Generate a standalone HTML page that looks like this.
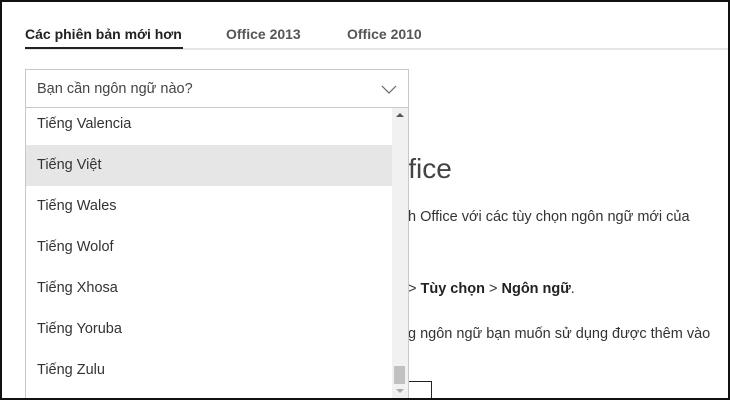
<!DOCTYPE html>
<html><head><meta charset="utf-8"><style>
*{margin:0;padding:0;box-sizing:border-box}
html,body{width:730px;height:400px;overflow:hidden}
body{background:#fff;font-family:"Liberation Sans","DejaVu Sans",sans-serif;color:#222;position:relative}
.frame{position:absolute;left:0;top:0;width:730px;height:400px;border:2px solid #111;z-index:10;pointer-events:none}
.a{position:absolute;white-space:nowrap}
.tab{font-weight:bold;font-size:14px;top:26px;color:#555}
.item{position:absolute;left:26px;width:366px;height:41px;line-height:41px;padding-left:11px;font-size:14.5px;color:#333}
.rt{font-size:14.5px;color:#333}
</style></head><body>
<div class="frame"></div>
<div class="a tab" style="left:25px;color:#222">Các phiên bản mới hơn</div>
<div class="a tab" style="left:226px">Office 2013</div>
<div class="a tab" style="left:347px">Office 2010</div>
<div class="a" style="left:25px;top:48px;width:704px;height:2px;background:#e6e6e6"></div>
<div class="a" style="left:25px;top:47px;width:158px;height:2px;background:#222"></div>

<div class="a" style="left:401px;top:153px;font-size:28px;color:#444;font-weight:300">ffice</div>
<div class="a rt" style="left:408px;top:209px">h Office với các tùy chọn ngôn ngữ mới của</div>
<div class="a rt" style="left:408px;top:281px">&gt; <b style="color:#222">Tùy chọn</b> &gt; <b style="color:#222">Ngôn ngữ</b>.</div>
<div class="a rt" style="left:408px;top:326px">g ngôn ngữ bạn muốn sử dụng được thêm vào</div>
<div class="a" style="left:400px;top:381px;width:32px;height:30px;border:1.5px solid #222"></div>

<div class="a" style="left:25px;top:69px;width:384px;height:39px;border:1px solid #c8c8c8;background:#fff"></div>
<div class="a" style="left:37px;top:81px;font-size:14.5px;color:#444">Bạn cần ngôn ngữ nào?</div>
<svg class="a" style="left:381px;top:85px" width="16" height="10"><path d="M1 1 L8 8 L15 1" fill="none" stroke="#666" stroke-width="1.2"/></svg>

<div class="a" style="left:25px;top:107px;width:384px;height:293px;border:1px solid #c8c8c8;border-bottom:none;background:#fff"></div>
<div class="item" style="top:104px">Tiếng Valencia</div>
<div class="item" style="top:145px;background:#e6e6e6">Tiếng Việt</div>
<div class="item" style="top:186px">Tiếng Wales</div>
<div class="item" style="top:227px">Tiếng Wolof</div>
<div class="item" style="top:268px">Tiếng Xhosa</div>
<div class="item" style="top:309px">Tiếng Yoruba</div>
<div class="item" style="top:350px">Tiếng Zulu</div>
<div class="a" style="left:392px;top:108px;width:16px;height:292px;background:#f1f1f1"></div>
<svg class="a" style="left:396px;top:112px" width="8" height="6"><path d="M0 5 L4 1 L8 5Z" fill="#555"/></svg>
<div class="a" style="left:394px;top:366px;width:11px;height:18px;background:#c1c1c1"></div>
<svg class="a" style="left:396px;top:388px" width="8" height="6"><path d="M0 1 L4 5 L8 1Z" fill="#aaa"/></svg>
</body></html>
